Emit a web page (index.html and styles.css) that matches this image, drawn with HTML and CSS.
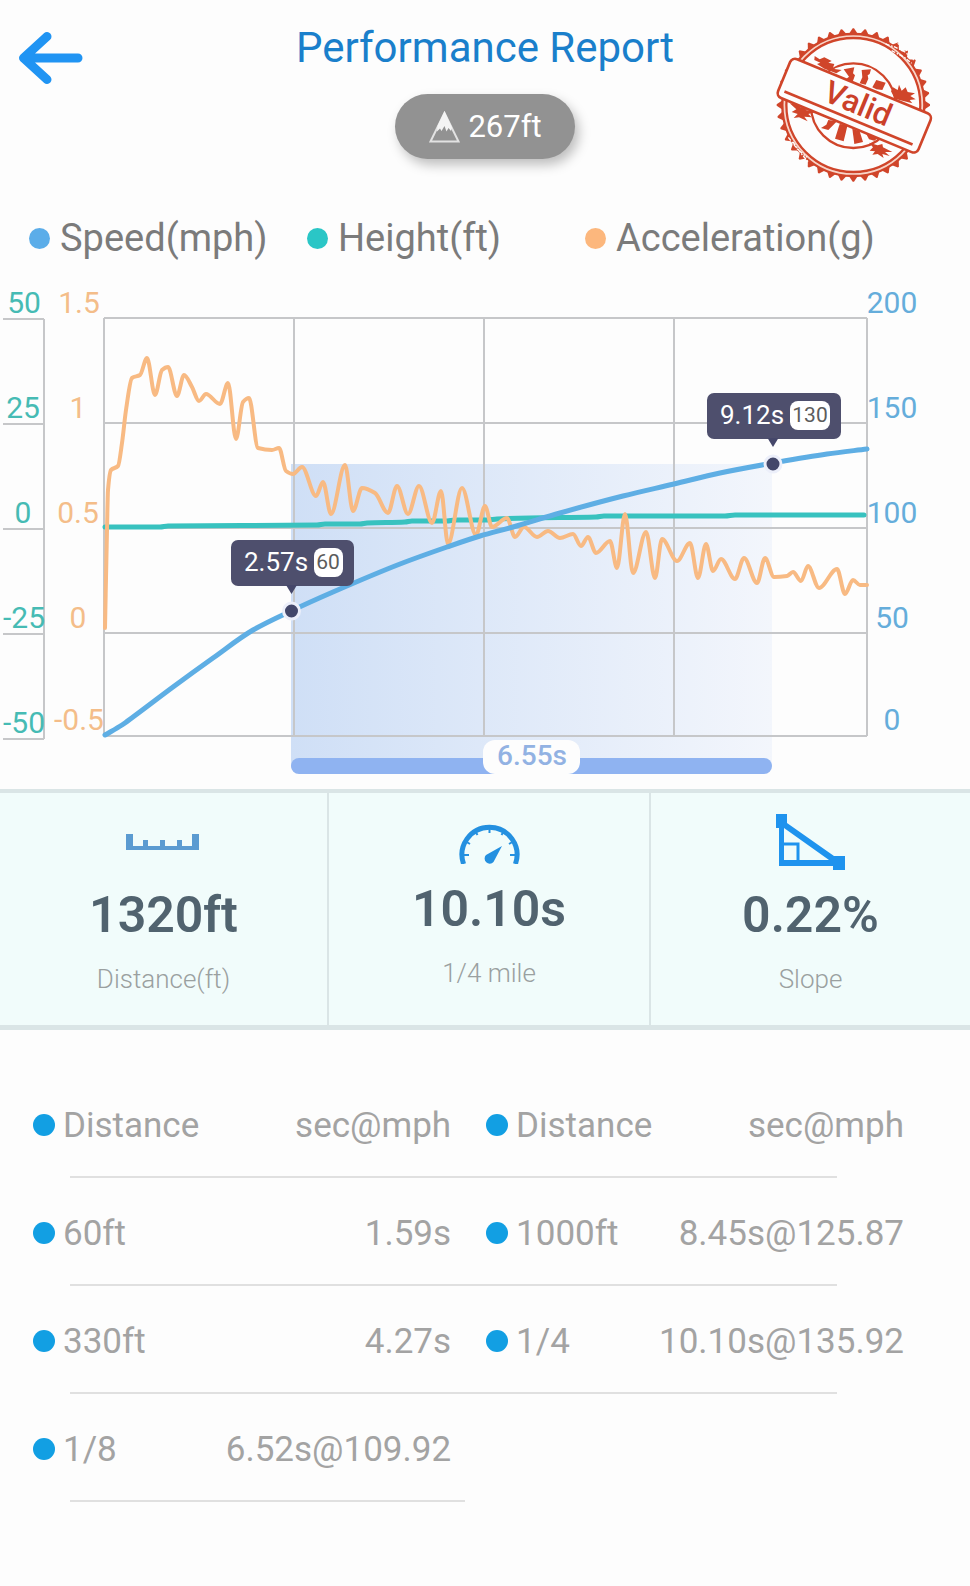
FILE: index.html
```html
<!DOCTYPE html>
<html lang="en">
<head>
<meta charset="utf-8">
<meta name="viewport" content="width=device-width, initial-scale=1">
<title>Performance Report</title>
<link rel="stylesheet" href="styles.css">
</head>
<body>
<header class="header">
  <button class="back" type="button" aria-label="Back">
    <svg width="68" height="60" viewBox="17 28 68 60" aria-hidden="true"><path d="M78 58H24M47 36.500L23.500 58L47 79.500" /></svg>
  </button>
  <div class="heading">
    <h1 class="title">Performance Report</h1>
    <div class="altitude">
      <svg width="31" height="32" viewBox="0 0 31 32" aria-hidden="true">
        <path class="peak-outline" d="M15.500 2L1.500 30.500H29.500Z" />
        <path class="peak-snow" d="M15.500 0L23 16.500L22 20L19.500 17L17.500 20.500L15.500 15L12.500 20L11 17.500L8 20.500L8.500 15Z" />
      </svg>
      <span>267ft</span>
    </div>
  </div>
  <svg class="stamp" width="180" height="170" viewBox="0 0 540 510" role="img" aria-label="Valid">
    <g id="teeth" class="stamp-fill"></g>
    <circle class="stamp-pale" cx="265" cy="255" r="209" />
    <circle class="stamp-ring" cx="265" cy="255" r="213" />
    <circle class="stamp-ring" cx="265" cy="255" r="201" />
    <circle class="stamp-ring" cx="265" cy="257" r="127" />
    <g class="stamp-wear">
      <path d="M362 72L392 82L420 96L446 120M380 92L418 112L440 130M398 70L426 92" />
      <path d="M70 352L96 386L126 412M84 366L108 400L130 426" />
    </g>
    <g class="stamp-fill">
      <path d="M149 108L164 118L178 112L200 123L190 128L208 132L203 146L230 150L214 160L178 146L156 132L166 128L148 120Z" />
      <path d="M384 202L398 210L402 194L410 212L422 202L428 216L450 220L436 228L452 238L434 240L442 250L412 242L390 236L378 214Z" />
      <path d="M74 250L96 254L106 262L126 262L122 270L152 276L130 282L140 292L118 290L128 304L102 292L86 294L98 282L80 276L94 268Z" />
      <path d="M312 368L338 376L352 372L354 382L382 396L360 396L374 408L352 402L356 414L338 402L322 404L330 394L314 392L324 382Z" />
      <path d="M236 148L268 142L264 160L270 166L262 188L240 180L252 170Z" />
      <path d="M290 150L318 148L314 162L308 166L310 176L302 194L284 190L292 172Z" />
      <path d="M334 180L362 188L352 210L334 208L322 202Z" />
      <path d="M190 300L216 304L190 330L168 324L184 314Z" />
      <path d="M224 312L248 314L236 364L210 356Z" />
      <path d="M262 326L284 334L294 366L268 372Z" />
      <path d="M302 338L342 352L328 362L312 358Z" />
    </g>
    <g transform="rotate(22.500 268 257)">
      <rect class="stamp-banner" x="40" y="194" width="456" height="126" rx="16" />
      <path class="stamp-rule" d="M58 298H474" />
      <text class="stamp-text" x="276" y="279" text-anchor="middle">Valid</text>
    </g>
  </svg>
</header>

<main>
  <ul class="legend">
    <li class="legend-item legend-speed">Speed(mph)</li>
    <li class="legend-item legend-height">Height(ft)</li>
    <li class="legend-item legend-accel">Acceleration(g)</li>
  </ul>

  <svg class="chart" viewBox="0 280 970 509" role="img" aria-label="Speed, height and acceleration over time">
    <defs>
      <linearGradient id="span-fill"><stop offset="0" stop-color="#cfdff6" /><stop offset="1" stop-color="#f3f6fc" /></linearGradient>
    </defs>
    <rect x="291" y="464" width="481" height="304" fill="url(#span-fill)" />
    <path class="grid" d="M104 318H867M104 423H867M104 528H867M104 633H867M104 736H867M104 318V736M294 318V736M484 318V736M674 318V736M867 318V736" />
    <path class="grid" d="M3 319H44M3 424H44M3 529H44M3 634H44M3 739H44M44 319V739" />
    <g class="axis axis-height">
      <text x="24" y="313">50</text><text x="23" y="418">25</text><text x="23" y="523">0</text><text x="24" y="628">-25</text><text x="24" y="733">-50</text>
    </g>
    <g class="axis axis-accel">
      <text x="79" y="313">1.5</text><text x="78" y="418">1</text><text x="78" y="523">0.5</text><text x="78" y="628">0</text><text x="79" y="730">-0.5</text>
    </g>
    <g class="axis axis-speed">
      <text x="892" y="313">200</text><text x="892" y="418">150</text><text x="892" y="523">100</text><text x="892" y="628">50</text><text x="892" y="730">0</text>
    </g>
    <path id="height-line" class="line line-height" />
    <path id="accel-line" class="line line-accel" />
    <path id="speed-line" class="line line-speed" />

    <g>
      <rect class="tip" x="231" y="540" width="123" height="46" rx="7" />
      <path class="tip-arrow" d="M286 585H297L291.500 594Z" />
      <text class="tip-time" x="244" y="571">2.57s</text>
      <rect class="tip-pill" x="314" y="548" width="29" height="29" rx="8" />
      <text class="tip-speed" x="328" y="569">60</text>
      <circle class="marker" cx="291.500" cy="611" r="8" />
    </g>
    <g>
      <rect class="tip" x="707" y="393" width="134" height="46" rx="7" />
      <path class="tip-arrow" d="M767.500 438H778.500L773 447Z" />
      <text class="tip-time" x="720" y="424">9.12s</text>
      <rect class="tip-pill" x="790" y="401" width="40" height="29" rx="8" />
      <text class="tip-speed" x="810" y="422">130</text>
      <circle class="marker" cx="773" cy="464" r="8" />
    </g>

    <rect class="span-bar" x="291" y="758" width="481" height="16" rx="8" />
    <rect class="span-pill" x="483" y="740" width="97" height="34" rx="12" />
    <text class="span-text" x="532" y="765">6.55s</text>
  </svg>

  <section class="stats" aria-label="Run summary">
    <div class="stat">
      <svg class="ruler" width="75" height="56" viewBox="126 814 75 56" aria-hidden="true"><path d="M126 834h7v12h10v-6h5v6h12v-6h5v6h12v-6h5v6h10v-12h7v16h-73z" /></svg>
      <div class="stat-value">1320ft</div>
      <div class="stat-label">Distance(ft)</div>
    </div>
    <div class="stat">
      <svg class="gauge" width="61" height="50" viewBox="459 815 61 50" aria-hidden="true">
        <path class="gauge-arc" d="M463.600 865A27.500 27.500 0 1 1 515.400 865" />
        <path class="gauge-ticks" d="M463 856h6M465 842l5 3M474.500 831l3 5M489.500 828v6M504.500 831l-3 5M514 842l-5 3M516 856h-6" />
        <path class="gauge-needle" d="M502 847L493.500 863A5 5 0 1 1 486 856Z" />
      </svg>
      <div class="stat-value">10.10s</div>
      <div class="stat-label">1/4 mile</div>
    </div>
    <div class="stat">
      <svg class="slope" width="69" height="56" viewBox="777 814 69 56" aria-hidden="true">
        <path class="slope-fill" d="M777 814h11v9L835 856h11v14h-12v-4h-54v-38h-3zM785 828v32h45z" />
        <path class="slope-angle" d="M785 844h14v17" />
      </svg>
      <div class="stat-value">0.22%</div>
      <div class="stat-label">Slope</div>
    </div>
  </section>

  <table class="splits">
    <colgroup><col class="col-first"><col class="col-time"><col class="col-second"><col class="col-time"></colgroup>
    <thead>
      <tr><th scope="col" class="mark">Distance</th><th scope="col" class="time">sec@mph</th><th scope="col" class="mark second">Distance</th><th scope="col" class="time">sec@mph</th></tr>
    </thead>
    <tbody>
      <tr><td class="mark">60ft</td><td class="time">1.59s</td><td class="mark second">1000ft</td><td class="time">8.45s@125.87</td></tr>
      <tr><td class="mark">330ft</td><td class="time">4.27s</td><td class="mark second">1/4</td><td class="time">10.10s@135.92</td></tr>
      <tr class="half"><td class="mark">1/8</td><td class="time">6.52s@109.92</td><td></td><td></td></tr>
    </tbody>
  </table>
</main>
<script src="chart.js"></script>
</body>
</html>
```
FILE: styles.css
```css
* { box-sizing: border-box; }

body {
  margin: 0;
  background: #fdfdfd;
  color: #7b7b7b;
  font-family: Roboto, "Liberation Sans", sans-serif;
}

/* Header */
.header {
  display: grid;
  grid-template-columns: 1fr auto 1fr;
  align-items: start;
  padding: 20px 17px 24px;
}
.back {
  justify-self: start;
  margin: 8px 0 0;
  padding: 0;
  border: 0;
  background: none;
  cursor: pointer;
}
.back svg { display: block; }
.back path {
  fill: none;
  stroke: #2094f3;
  stroke-width: 9;
  stroke-linecap: round;
  stroke-linejoin: round;
}
.heading {
  display: flex;
  flex-direction: column;
  align-items: center;
  gap: 18px;
}
.title {
  margin: 0;
  color: #1a7fcb;
  font-size: 42px;
  font-weight: 400;
  line-height: 56px;
}
.altitude {
  display: flex;
  align-items: center;
  gap: 8px;
  height: 65px;
  padding: 0 33px 0 34px;
  border-radius: 33px;
  background: #929292;
  box-shadow: 4px 6px 12px rgba(0, 0, 0, 0.25);
  color: #fff;
  font-size: 31px;
}
.peak-outline { fill: none; stroke: #e2e2e2; stroke-width: 2; }
.peak-snow { fill: #f4f4f4; }

.stamp { justify-self: end; margin-right: 8px; }
.stamp-fill { fill: #d0452a; }
.stamp-pale { fill: none; stroke: #f9d5c8; stroke-width: 8; }
.stamp-ring { fill: none; stroke: #d0452a; stroke-width: 7; }
.stamp-wear { fill: none; stroke: #fdfdfd; stroke-width: 4; stroke-dasharray: 12 5 5 4; }
.stamp-banner { fill: #fdfdfd; stroke: #d0452a; stroke-width: 8; }
.stamp-rule { stroke: #d0452a; stroke-width: 8; }
.stamp-text { fill: #cb4029; font-size: 94px; font-weight: 500; }

/* Legend */
.legend {
  display: grid;
  grid-template-columns: 278fr 278fr 385fr;
  margin: 0;
  padding: 0 0 18px 29px;
  list-style: none;
  font-size: 38px;
  line-height: 48px;
}
.legend-item { display: flex; align-items: center; gap: 10px; }
.legend-item::before {
  content: "";
  width: 21px;
  height: 21px;
  border-radius: 50%;
  background: currentColor;
}
.legend-speed::before { background: #5bade9; }
.legend-height::before { background: #2ac6c6; }
.legend-accel::before { background: #fcb77d; }

/* Chart */
.chart { display: block; width: 100%; height: auto; }
.grid { fill: none; stroke: #c6c7c9; stroke-width: 2; }
.axis { font-size: 30px; text-anchor: middle; }
.axis-height { fill: #46bbb4; }
.axis-accel { fill: #f4bd89; }
.axis-speed { fill: #65addb; }
.line { fill: none; stroke-linecap: round; stroke-linejoin: round; }
.line-height { stroke: #38c2bf; stroke-width: 5; }
.line-accel { stroke: #f8ba83; stroke-width: 4; }
.line-speed { stroke: #5eaee4; stroke-width: 5; }
.tip { fill: #4e4f6d; }
.tip-arrow { fill: #45476a; }
.tip-time { fill: #fff; font-size: 26px; }
.tip-pill { fill: #fff; }
.tip-speed { fill: #5c5c5c; font-size: 21px; text-anchor: middle; }
.marker { fill: #43476a; stroke: #eceffa; stroke-width: 3; }
.span-bar { fill: #8fb3f1; }
.span-pill { fill: #fdfdfd; }
.span-text { fill: #92b2e3; font-size: 28px; font-weight: 500; text-anchor: middle; }

/* Summary */
.stats {
  display: grid;
  grid-template-columns: 327fr 322fr 321fr;
  border-top: 4px solid #dae5e6;
  border-bottom: 5px solid #dae5e6;
  background: #f1fcfb;
}
.stat {
  display: flex;
  flex-direction: column;
  align-items: center;
  padding: 21px 0 28px;
}
.stat + .stat { border-left: 2px solid #dae5e6; }
.stat-value {
  margin: 15px 0 16px;
  color: #51636f;
  font-size: 50px;
  font-weight: 600;
  line-height: 60px;
}
.stat-label {
  color: #9aa0a0;
  font-size: 26px;
  font-weight: 300;
  line-height: 36px;
}
.ruler { fill: #5b9bd1; }
.gauge-arc { fill: none; stroke: #2490e0; stroke-width: 5; }
.gauge-ticks { stroke: #2490e0; stroke-width: 2; }
.gauge-needle { fill: #2490e0; }
.slope-fill { fill: #1f93ee; fill-rule: evenodd; }
.slope-angle { fill: none; stroke: #1f93ee; stroke-width: 3; }

/* Split times */
.splits {
  width: calc(100% - 99px);
  margin: 40px 66px 84px 33px;
  border-collapse: collapse;
  table-layout: fixed;
  color: #a3a3a3;
  font-size: 35px;
  line-height: 104px;
}
.col-first { width: 17%; }
.col-time { width: 31%; }
.col-second { width: 21%; }
.splits tr { position: relative; }
.splits tr::after {
  content: "";
  position: absolute;
  right: 67px;
  bottom: 0;
  left: 37px;
  height: 2px;
  background: #e0e0e0;
}
.splits .half::after { right: 439px; }
.splits th, .splits td { padding: 4px 0 0; font-weight: 400; white-space: nowrap; }
.splits .second { padding-left: 35px; }
.mark { text-align: left; }
.mark::before {
  content: "";
  display: inline-block;
  width: 22px;
  height: 22px;
  margin-right: 8px;
  border-radius: 50%;
  background: #129fe3;
  vertical-align: 1px;
}
.time { text-align: right; }
```
FILE: chart.js
```js
const accel = [
  [105, 628], [107, 530], [108, 490], [111, 470], [118, 466], [122, 443], [126, 410], [132, 378], [140, 375],
  [147, 358], [155, 395], [162, 370], [168, 367], [177, 396], [184, 375], [192, 387], [199, 401], [206, 394],
  [220, 404], [228, 383], [236, 439], [243, 402], [249, 398], [258, 448], [272, 450], [279, 448], [286, 471],
  [293, 474], [302, 467], [316, 496], [323, 482], [331, 514], [345, 465], [353, 511], [362, 488], [375, 493],
  [388, 513], [397, 486], [408, 514], [419, 486], [432, 523], [441, 491], [448, 544], [462, 488], [476, 535],
  [485, 506], [492, 527], [507, 518], [515, 537], [524, 527], [537, 537], [548, 531], [560, 538], [573, 534],
  [581, 546], [588, 537], [596, 553], [610, 541], [617, 568], [625, 514], [633, 573], [646, 532], [655, 578],
  [662, 539], [677, 561], [690, 543], [698, 578], [706, 544], [713, 571], [721, 559], [735, 579], [744, 558],
  [757, 583], [765, 558], [774, 577], [787, 576], [793, 572], [801, 581], [808, 566], [819, 588], [837, 569],
  [845, 594], [853, 580], [860, 585], [867, 585]
];
const height = [
  [105, 527], [160, 527], [168, 526], [317, 525], [325, 524], [360, 524], [367, 523], [405, 522], [412, 521],
  [447, 521], [455, 520], [487, 520], [497, 519], [530, 518], [596, 517], [604, 516], [725, 516], [735, 515], [864, 515]
];
const speed = [
  [105, 735], [122, 725], [133, 717], [173, 687], [213, 658], [253, 630], [291, 611], [333, 592], [400, 564],
  [447, 547], [480, 536], [513, 527], [560, 513], [623, 496], [674, 484], [720, 473], [773, 463], [827, 454], [867, 449]
];

// Monotone cubic interpolation: peaks and troughs stay on their samples.
function smoothPath(points) {
  const slope = (i) => (points[i + 1][1] - points[i][1]) / (points[i + 1][0] - points[i][0]);
  const tangents = points.map((p, i) => {
    if (i === 0) return slope(0);
    if (i === points.length - 1) return slope(i - 1);
    const a = slope(i - 1);
    const b = slope(i);
    return a * b <= 0 ? 0 : (2 * a * b) / (a + b);
  });
  let d = `M${points[0]}`;
  for (let i = 1; i < points.length; i++) {
    const [x0, y0] = points[i - 1];
    const [x1, y1] = points[i];
    const h = (x1 - x0) / 3;
    d += `C${x0 + h},${y0 + h * tangents[i - 1]} ${x1 - h},${y1 - h * tangents[i]} ${x1},${y1}`;
  }
  return d;
}

document.getElementById("accel-line").setAttribute("d", smoothPath(accel));
document.getElementById("height-line").setAttribute("d", smoothPath(height));
document.getElementById("speed-line").setAttribute("d", smoothPath(speed));

// Saw-tooth rim of the stamp.
const teeth = document.getElementById("teeth");
for (let i = 0; i < 40; i++) {
  const tooth = document.createElementNS("http://www.w3.org/2000/svg", "path");
  tooth.setAttribute("d", "M250 44L263 25H267L280 44Z");
  tooth.setAttribute("transform", `rotate(${i * 9} 265 255)`);
  teeth.append(tooth);
}
```
